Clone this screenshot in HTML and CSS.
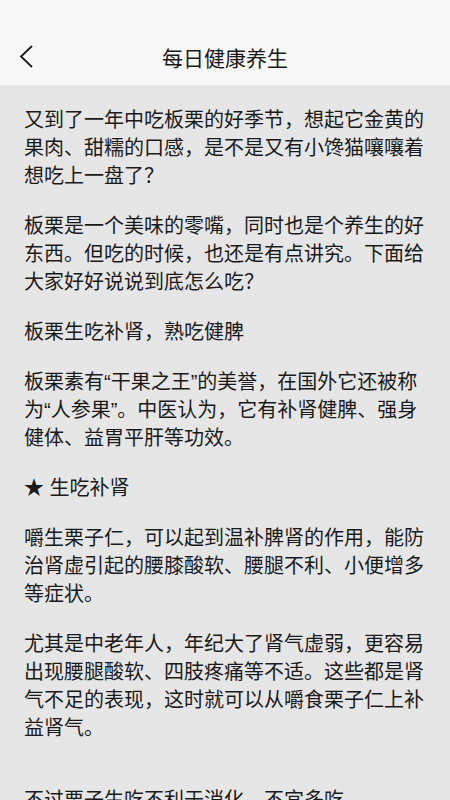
FILE: index.html
```html
<!DOCTYPE html>
<html lang="zh-CN">
<head>
    <meta charset="UTF-8">
    <meta name="viewport" content="width=device-width, initial-scale=1.0">
    <title>每日健康养生</title>
    <link rel="stylesheet" href="styles.css">
</head>
<body>
    <header class="top-bar">
        <div class="status-bar"></div>
        <div class="nav-bar">
            <a class="back" href="#" aria-label="返回">
                <svg width="16" height="26" viewBox="0 0 16 26">
                    <path d="M13 2 L2 12.5 L13 23" fill="none" stroke="#1a1a1a" stroke-width="1.8"/>
                </svg>
            </a>
            <h1 class="title">每日健康养生</h1>
        </div>
    </header>

    <article class="article">
        <p>又到了一年中吃板栗的好季节，想起它金黄的果肉、甜糯的口感，是不是又有小馋猫嚷嚷着想吃上一盘了？</p>
        <p>板栗是一个美味的零嘴，同时也是个养生的好东西。但吃的时候，也还是有点讲究。下面给大家好好说说到底怎么吃？</p>
        <p>板栗生吃补肾，熟吃健脾</p>
        <p>板栗素有“干果之王”的美誉，在国外它还被称<br>为“人参果”。中医认为，它有补肾健脾、强身<br>健体、益胃平肝等功效。</p>
        <p>★ 生吃补肾</p>
        <p>嚼生栗子仁，可以起到温补脾肾的作用，能防治肾虚引起的腰膝酸软、腰腿不利、小便增多等症状。</p>
        <p>尤其是中老年人，年纪大了肾气虚弱，更容易出现腰腿酸软、四肢疼痛等不适。这些都是肾气不足的表现，这时就可以从嚼食栗子仁上补益肾气。</p>
        <p class="gap">不过栗子生吃不利于消化，不宜多吃。</p>
    </article>
</body>
</html>
```

FILE: styles.css
```css
html, body {
    margin: 0;
    padding: 0;
}
body {
    font-family: "Liberation Sans", "Noto Sans CJK SC", sans-serif;
    background-color: #e6e6e6;
    color: #1a1a1a;
    width: 450px;
    height: 800px;
    overflow: hidden;
}
.top-bar {
    background-color: #f8f8f8;
}
.status-bar {
    height: 28px;
}
.nav-bar {
    position: relative;
    height: 57px;
    display: flex;
    align-items: center;
    justify-content: center;
}
.back {
    position: absolute;
    left: 19px;
    top: 16px;
    display: block;
    line-height: 0;
}
.title {
    margin: 0;
    font-size: 21px;
    font-weight: normal;
    color: #1a1a1a;
}
.article {
    padding: 21px 24px 0;
}
.article p {
    margin: 0 0 22px;
    font-size: 20px;
    line-height: 28px;
    text-spacing-trim: space-all;
}
.article p.gap {
    margin-top: 44px;
}
```
